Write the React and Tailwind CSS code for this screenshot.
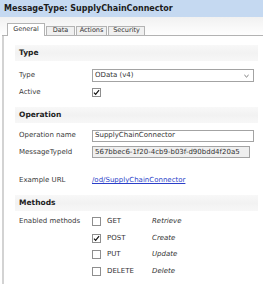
import React from "react";

const Check = () => (
  <svg viewBox="0 0 9 9" className="w-[7px] h-[7px]">
    <path d="M1.2 4.6 L3.4 6.8 L7.8 1.6" fill="none" stroke="#111" strokeWidth="1.5" />
  </svg>
);

const CheckBox = ({ checked }) => (
  <div className="w-[9px] h-[9px] border border-[#8e8e8e] bg-white flex items-center justify-center shrink-0">
    {checked && <Check />}
  </div>
);

const Section = ({ title }) => (
  <div className="h-[16px] flex items-center px-[4px] bg-gradient-to-b from-[#f8f8f8] via-[#f2f2f2] to-[#f7f7f7] text-[7.5px] font-bold text-[#222]">
    {title}
  </div>
);

const Row = ({ label, h = "h-[17px]", children }) => (
  <div className={`flex items-center px-[4px] ${h}`}>
    <div className="w-[73px] shrink-0 text-[#3a3a3a]">{label}</div>
    {children}
  </div>
);

const methods = [
  { name: "GET", desc: "Retrieve", checked: false },
  { name: "POST", desc: "Create", checked: true },
  { name: "PUT", desc: "Update", checked: false },
  { name: "DELETE", desc: "Delete", checked: false },
];

const tabs = ["General", "Data", "Actions", "Security"];
const tabWidths = { General: "w-[38px]", Data: "w-[29px]", Actions: "w-[31px]", Security: "w-[37px]" };

const App = () => {
  return (
    <div className="w-[263px] h-[284px] overflow-hidden bg-white font-['DejaVu_Sans',Verdana,sans-serif] text-[7px] text-[#333]">
      <div className="h-[17px] bg-[#c5d9f1] flex items-center px-[4px] text-[8px] font-bold text-[#1c1c1c]">
        MessageType: SupplyChainConnector
      </div>

      <div className="pt-[6px] bg-gradient-to-b from-[#f1f1f1] to-white">
        <div className="flex items-end gap-[1px] pl-[5px] border-b border-[#b3b3b3] ml-[2px] text-[6.5px]">
          {tabs.map((tab) =>
            tab === "General" ? (
              <div
                key={tab}
                className={`${tabWidths[tab]} h-[13px] -mb-px bg-white border border-b-0 border-[#b3b3b3] flex items-center justify-center text-[#333]`}
              >
                {tab}
              </div>
            ) : (
              <div
                key={tab}
                className={`${tabWidths[tab]} h-[9px] bg-[#f0f0f0] border border-b-0 border-[#b3b3b3] flex items-center justify-center text-[#333]`}
              >
                {tab}
              </div>
            ),
          )}
        </div>
      </div>

      <div className="ml-[2px] border-l-2 border-[#d3d3d3] h-full">
        <div className="ml-[11px] mr-[5px] pt-[9px]">
          <Section title="Type" />
          <div className="h-[6px]" />
          <Row label="Type">
            <div className="w-[164px] h-[13px] border border-[#a3a3a3] bg-white flex items-center justify-between pl-[2px] pr-[4px]">
              <span>OData (v4)</span>
              <svg viewBox="0 0 6 4" className="w-[5px] h-[4px]">
                <path d="M0.5 0.8 L3 3.2 L5.5 0.8" fill="none" stroke="#555" strokeWidth="1" />
              </svg>
            </div>
          </Row>
          <Row label="Active">
            <CheckBox checked />
          </Row>

          <div className="h-[6px]" />
          <Section title="Operation" />
          <div className="h-[4px]" />
          <Row label="Operation name">
            <div className="w-[163px] h-[12px] border border-[#a3a3a3] bg-white flex items-center pl-[2px]">
              SupplyChainConnector
            </div>
          </Row>
          <Row label="MessageTypeId" h="h-[16px]">
            <div className="w-[158px] h-[12px] border border-[#a3a3a3] bg-[#efefef] flex items-center pl-[2px]">
              567bbec6-1f20-4cb9-b03f-d90bdd4f20a5
            </div>
          </Row>

          <div className="h-[12px]" />
          <Row label="Example URL">
            <a href="#" className="text-[#2b3fc9] underline">
              /od/SupplyChainConnector
            </a>
          </Row>

          <div className="h-[6px]" />
          <Section title="Methods" />
          <div className="h-[2px]" />
          {methods.map((m, i) => (
            <Row key={m.name} label={i === 0 ? "Enabled methods" : ""} h="h-[16.7px]">
              <CheckBox checked={m.checked} />
              <span className="w-[45px] ml-[6px] shrink-0">{m.name}</span>
              <span className="italic">{m.desc}</span>
            </Row>
          ))}
        </div>
      </div>
    </div>
  );
};

export default App;
